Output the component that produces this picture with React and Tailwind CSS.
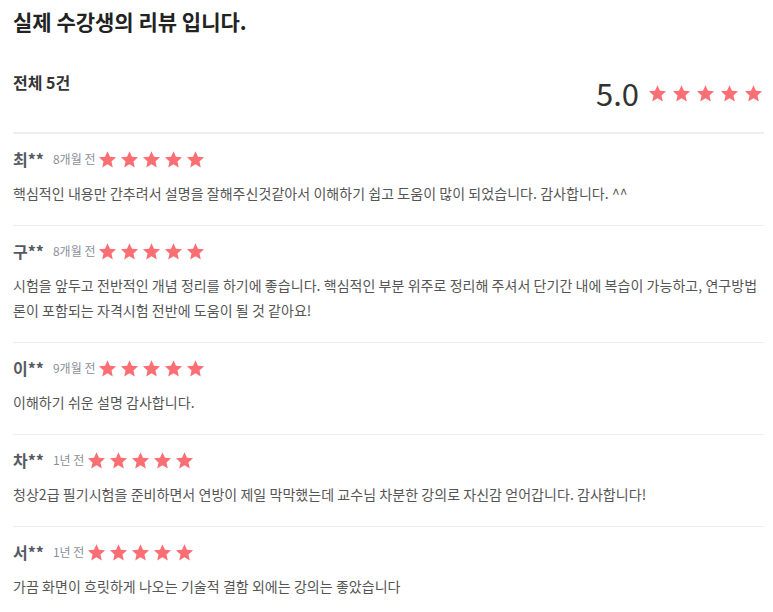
import React from "react";

const Star = ({ size = 18 }) => (
  <svg width={size} height={size} viewBox="0 0 24 24" className="shrink-0">
    <polygon
      points="12,1.5 15.1,8.6 22.8,9.3 17,14.4 18.7,22 12,18 5.3,22 7,14.4 1.2,9.3 8.9,8.6"
      fill="#fb6f74"
    />
  </svg>
);

const Stars = ({ size, gap }) => (
  <div className={`flex items-center ${gap}`}>
    {[0, 1, 2, 3, 4].map((i) => (
      <Star key={i} size={size} />
    ))}
  </div>
);

const reviews = [
  {
    name: "최**",
    time: "8개월 전",
    text: "핵심적인 내용만 간추려서 설명을 잘해주신것같아서 이해하기 쉽고 도움이 많이 되었습니다. 감사합니다. ^^",
  },
  {
    name: "구**",
    time: "8개월 전",
    text: "시험을 앞두고 전반적인 개념 정리를 하기에 좋습니다. 핵심적인 부분 위주로 정리해 주셔서 단기간 내에 복습이 가능하고, 연구방법론이 포함되는 자격시험 전반에 도움이 될 것 같아요!",
  },
  { name: "이**", time: "9개월 전", text: "이해하기 쉬운 설명 감사합니다." },
  {
    name: "차**",
    time: "1년 전",
    text: "청상2급 필기시험을 준비하면서 연방이 제일 막막했는데 교수님 차분한 강의로 자신감 얻어갑니다. 감사합니다!",
  },
  {
    name: "서**",
    time: "1년 전",
    text: "가끔 화면이 흐릿하게 나오는 기술적 결함 외에는 강의는 좋았습니다",
  },
];

export default function App() {
  return (
    <div
      className="w-[773px] h-[612px] overflow-hidden bg-white pl-[13px] pr-[9px]"
      style={{ fontFamily: '"Noto Sans CJK KR", "Noto Sans", sans-serif' }}
    >
      <h1 className="pt-[6px] text-[21px] leading-[30px] font-bold text-[#222]">
        실제 수강생의 리뷰 입니다.
      </h1>
      <div className="mt-[35px] flex justify-between">
        <div className="self-start text-[16px] leading-[22px] font-bold text-[#333]">
          전체 5건
        </div>
        <div className="self-end mt-[2px] flex items-center gap-[9px] pr-[1px]">
          <span className="text-[31px] leading-[40px] text-[#333]">5.0</span>
          <Stars size={19} gap="gap-[5px]" />
        </div>
      </div>
      <div className="mt-[19px] h-[2px] bg-[#eeeeee]" />
      {reviews.map((r, i) => (
        <div
          key={i}
          className={`pt-[14px] pb-[19px] ${
            i < reviews.length - 1 ? "border-b border-[#eeeeee]" : ""
          }`}
        >
          <div className="flex items-center h-[22px]">
            <span className="text-[16px] font-bold text-[#555a62] mr-[9px]">
              {r.name}
            </span>
            <span className="text-[12px] text-[#8a909a] mr-[3px]">{r.time}</span>
            <Stars size={19} gap="gap-[3px]" />
          </div>
          <p className="mt-[11px] text-[14px] leading-[25px] text-[#555] tracking-[0.05px]">
            {r.text}
          </p>
        </div>
      ))}
    </div>
  );
}
